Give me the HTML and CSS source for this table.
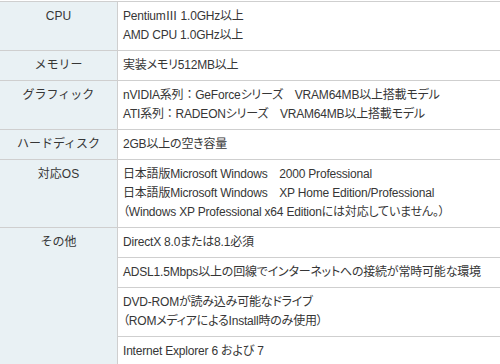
FILE: index.html
```html
<!DOCTYPE html>
<html lang="ja">
<head>
<meta charset="utf-8">
<link rel="stylesheet" href="styles.css">
</head>
<body>
<div class="spec">
  <div class="row">
    <div class="label">CPU</div>
    <div class="value">PentiumⅢ 1.0GHz以上<br>AMD CPU 1.0GHz以上</div>
  </div>
  <div class="row">
    <div class="label">メモリー</div>
    <div class="value">実装メモリ512MB以上</div>
  </div>
  <div class="row">
    <div class="label">グラフィック</div>
    <div class="value">nVIDIA系列<span class="fw">：</span>GeForceシリーズ　VRAM64MB以上搭載モデル<br>ATI系列<span class="fw">：</span>RADEONシリーズ　VRAM64MB以上搭載モデル</div>
  </div>
  <div class="row">
    <div class="label">ハードディスク</div>
    <div class="value">2GB以上の空き容量</div>
  </div>
  <div class="row">
    <div class="label">対応OS</div>
    <div class="value">日本語版Microsoft Windows　2000 Professional<br>日本語版Microsoft Windows　XP Home Edition/Professional<br>（Windows XP Professional x64 Editionには対応していません。）</div>
  </div>
  <div class="row">
    <div class="label">その他</div>
    <div class="sub">
      <div class="value">DirectX 8.0または8.1必須</div>
      <div class="value">ADSL1.5Mbps以上の回線でインターネットへの接続が常時可能な環境</div>
      <div class="value">DVD-ROMが読み込み可能なドライブ<br>（ROMメディアによるInstall時のみ使用）</div>
      <div class="value">Internet Explorer 6 および 7</div>
    </div>
  </div>
</div>
</body>
</html>
```
FILE: styles.css
```css
html, body {
  margin: 0;
  padding: 0;
  background: #ffffff;
}
body {
  font-family: "Liberation Sans", "Noto Sans CJK JP", sans-serif;
  font-size: 12px;
  color: #363636;
}
.spec {
  width: 520px;
  margin-top: 1px;
  border-top: 1px solid #cfcfcf;
}
.row {
  display: grid;
  grid-template-columns: 118px 1fr;
  border-bottom: 1px solid #cfcfcf;
}
.label {
  background: #e9f1f4;
  border-right: 1px solid #cfcfcf;
  text-align: center;
  padding: 5px 0;
  line-height: 19px;
}
.value {
  padding: 5px 5px;
  line-height: 19px;
  font-feature-settings: "palt";
  letter-spacing: -0.2px;
  white-space: nowrap;
}
.fw {
  font-feature-settings: normal;
}
.sub .value {
  border-bottom: 1px solid #cfcfcf;
}
.sub .value:last-child {
  border-bottom: none;
  padding-bottom: 30px;
}
```
